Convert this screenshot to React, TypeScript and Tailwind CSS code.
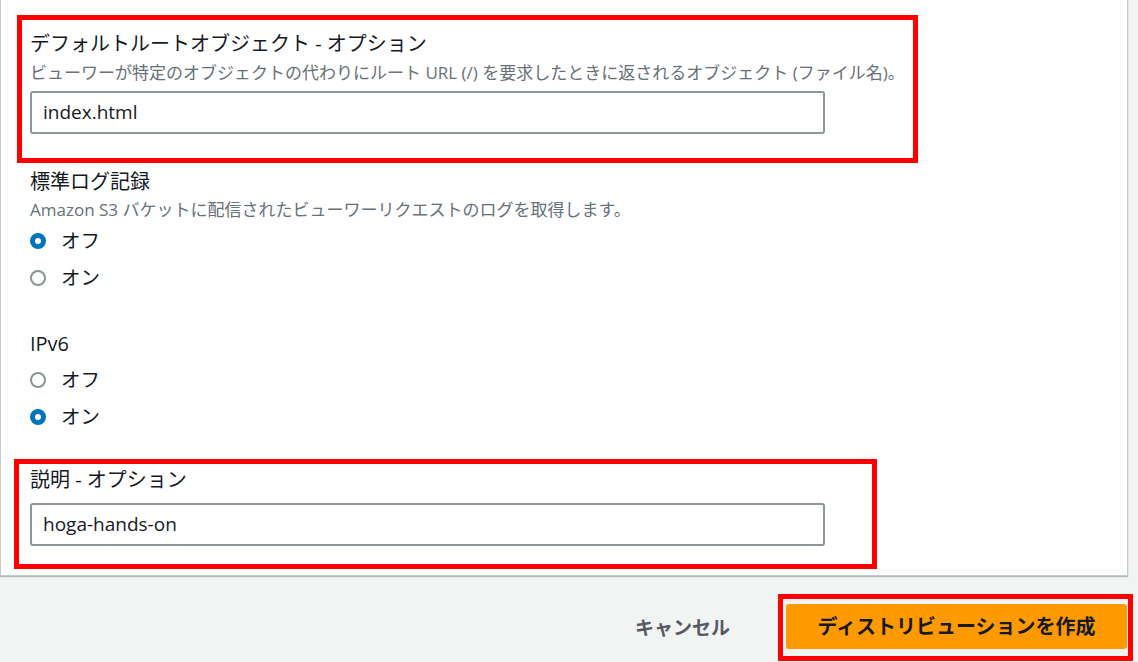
import React from 'react';

const FONT = { fontFamily: '"Open Sans", "Noto Sans CJK JP", sans-serif' };

const Radio: React.FC<{ label: string; checked?: boolean }> = ({ label, checked }) => (
  <div className="flex h-[37px] items-center">
    <span
      className={
        checked
          ? 'block h-4 w-4 rounded-full border-[5px] border-[#0073bb] bg-white'
          : 'block h-4 w-4 rounded-full border-2 border-[#879596] bg-white'
      }
    />
    <span className="ml-[15px] text-[19.5px] leading-[28px] text-[#16191f]">{label}</span>
  </div>
);

const TextInput: React.FC<{ value: string }> = ({ value }) => (
  <div className="flex h-[43px] w-[795px] items-center rounded-[3px] border-2 border-[#8d9799] bg-white pl-[11px] text-[19px] text-[#16191f]">
    {value}
  </div>
);

export default function App() {
  return (
    <div className="h-[662px] w-[1138px] overflow-hidden bg-[#f2f3f3]" style={FONT}>
      {/* settings card */}
      <div className="flex h-[576px] w-[1128px] flex-col border-x border-b border-[#c3cbcd] bg-white pt-[15px] shadow-[0_1px_1px_rgba(0,0,0,0.25)]">
        <div className="ml-[16px] h-[148px] w-[901px] border-[5px] border-[#ff0000] pl-[8px] pt-[10px]">
          <div className="text-[20px] leading-[28px] text-[#16191f]">デフォルトルートオブジェクト - オプション</div>
          <div className="mt-[4px] text-[17px] leading-[22px] text-[#687078]">
            ビューワーが特定のオブジェクトの代わりにルート URL (/) を要求したときに返されるオブジェクト (ファイル名)。
          </div>
          <div className="mt-[7px]">
            <TextInput value="index.html" />
          </div>
        </div>

        <div className="ml-[29px]">
          <div className="mt-[5px] text-[20px] leading-[28px] text-[#16191f]">標準ログ記録</div>
          <div className="mt-[3px] text-[17px] leading-[22px] text-[#687078]">
            Amazon S3 バケットに配信されたビューワーリクエストのログを取得します。
          </div>
          <div className="mt-[1px]">
            <Radio label="オフ" checked />
            <Radio label="オン" />
          </div>

          <div className="mt-[34px] text-[20px] leading-[28px] text-[#16191f]">IPv6</div>
          <div className="mt-[3px]">
            <Radio label="オフ" />
            <Radio label="オン" checked />
          </div>
        </div>

        <div className="ml-[13px] mt-[24px] h-[110px] w-[863px] border-[5px] border-[#ff0000] pl-[11px] pt-[2px]">
          <div className="text-[20px] leading-[28px] text-[#16191f]">説明 - オプション</div>
          <div className="mt-[9px]">
            <TextInput value="hoga-hands-on" />
          </div>
        </div>
      </div>

      {/* footer actions */}
      <div className="flex items-center justify-end pr-[5px] pt-[18px]">
        <button className="mr-[48px] text-[19px] font-bold leading-[28px] text-[#545b64]">キャンセル</button>
        <div className="h-[67px] w-[355px] border-[5px] border-[#ff0000] pl-[3px] pt-[5px]">
          <button className="h-[45px] w-[341px] rounded-[3px] bg-[#ff9900] text-[20px] font-bold text-[#16191f]">
            ディストリビューションを作成
          </button>
        </div>
      </div>
    </div>
  );
}
